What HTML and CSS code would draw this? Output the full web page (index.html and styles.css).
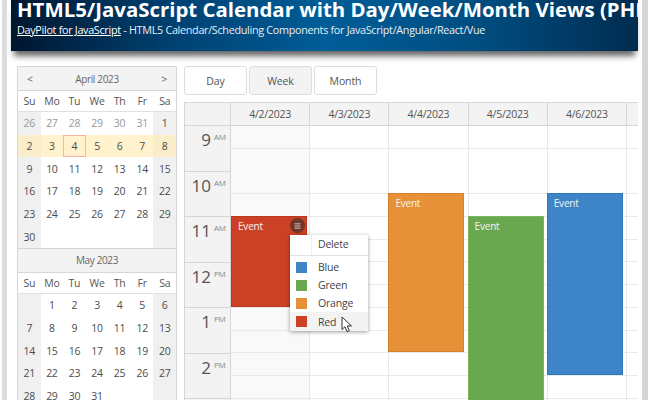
FILE: index.html
```html
<!DOCTYPE html>
<html lang="en">
<head>
<meta charset="utf-8">
<title>Calendar</title>
<link rel="stylesheet" href="styles.css">
</head>
<body>
<div class="frame">
  <header class="banner">
    <h1 class="title">HTML5/JavaScript Calendar with Day/Week/Month Views (PHP)</h1>
    <p class="sub"><a class="link" href="#">DayPilot for JavaScript</a> - HTML5 Calendar/Scheduling Components for JavaScript/Angular/React/Vue</p>
  </header>
  <main class="main">
    <aside class="nav">
      <div class="nav-head"><span>&lt;</span><span class="nav-month">April 2023</span><span>&gt;</span></div>
      <div class="dow"><span>Su</span><span>Mo</span><span>Tu</span><span>We</span><span>Th</span><span>Fr</span><span>Sa</span></div>
      <div class="days">
        <span class="we off">26</span><span class="off">27</span><span class="off">28</span><span class="off">29</span><span class="off">30</span><span class="off">31</span><span class="we">1</span>
        <span class="we hlw">2</span><span class="hl">3</span><span class="hl today">4</span><span class="hl">5</span><span class="hl">6</span><span class="hl">7</span><span class="we hlw">8</span>
        <span class="we">9</span><span>10</span><span>11</span><span>12</span><span>13</span><span>14</span><span class="we">15</span>
        <span class="we">16</span><span>17</span><span>18</span><span>19</span><span>20</span><span>21</span><span class="we">22</span>
        <span class="we">23</span><span>24</span><span>25</span><span>26</span><span>27</span><span>28</span><span class="we">29</span>
        <span class="we">30</span><span></span><span></span><span></span><span></span><span></span><span class="we"></span>
      </div>
      <div class="nav-head second"><span></span><span class="nav-month">May 2023</span><span></span></div>
      <div class="dow"><span>Su</span><span>Mo</span><span>Tu</span><span>We</span><span>Th</span><span>Fr</span><span>Sa</span></div>
      <div class="days">
        <span class="we"></span><span>1</span><span>2</span><span>3</span><span>4</span><span>5</span><span class="we">6</span>
        <span class="we">7</span><span>8</span><span>9</span><span>10</span><span>11</span><span>12</span><span class="we">13</span>
        <span class="we">14</span><span>15</span><span>16</span><span>17</span><span>18</span><span>19</span><span class="we">20</span>
        <span class="we">21</span><span>22</span><span>23</span><span>24</span><span>25</span><span>26</span><span class="we">27</span>
        <span class="we">28</span><span>29</span><span>30</span><span>31</span><span></span><span></span><span class="we"></span>
      </div>
    </aside>
    <section class="content">
      <div class="buttons">
        <button class="btn">Day</button>
        <button class="btn active">Week</button>
        <button class="btn">Month</button>
      </div>
      <div class="cal">
        <div class="cal-head">
          <div class="corner"></div>
          <div class="hcell">4/2/2023</div>
          <div class="hcell">4/3/2023</div>
          <div class="hcell">4/4/2023</div>
          <div class="hcell">4/5/2023</div>
          <div class="hcell">4/6/2023</div>
          <div class="hcell last"></div>
        </div>
        <div class="cal-body">
          <div class="times">
            <div class="hour"><span class="h">9</span><span class="ap">AM</span></div>
            <div class="hour"><span class="h">10</span><span class="ap">AM</span></div>
            <div class="hour"><span class="h">11</span><span class="ap">AM</span></div>
            <div class="hour"><span class="h">12</span><span class="ap">PM</span></div>
            <div class="hour"><span class="h">1</span><span class="ap">PM</span></div>
            <div class="hour"><span class="h">2</span><span class="ap">PM</span></div>
          </div>
          <div class="col sunday">
            <div class="event red">Event
              <span class="evt-menu"><svg class="evt-icon" viewBox="0 0 8 7"><path d="M.5 1h7M.5 3.5h7M.5 6h7"/></svg></span>
            </div>
          </div>
          <div class="col"></div>
          <div class="col"><div class="event orange">Event</div></div>
          <div class="col"><div class="event green">Event</div></div>
          <div class="col"><div class="event blue">Event</div></div>
          <div class="col last"></div>
          <div class="menu">
            <div class="mi del">Delete</div>
            <div class="mi"><i class="sw s-blue"></i>Blue</div>
            <div class="mi"><i class="sw s-green"></i>Green</div>
            <div class="mi"><i class="sw s-orange"></i>Orange</div>
            <div class="mi hover"><i class="sw s-red"></i>Red</div>
          </div>
          <svg class="cursor" viewBox="0 0 12 17"><path d="M1 1v12.5l3-2.8 2 5 2.3-1-2-4.8h4.2z"/></svg>
        </div>
      </div>
    </section>
  </main>
</div>
</body>
</html>
```
FILE: styles.css
```css
* { box-sizing: border-box; }
html, body { margin: 0; height: 100%; background: #fff; overflow: hidden; }
body {
  font-family: "Open Sans", "Liberation Sans", sans-serif;
  color: #444;
  padding: 0 2px 0 2px;
}
.frame {
  height: 400px;
  width: 646px;
  border-left: 5px solid #dcdcdc;
  border-right: 6px solid #d6d6d6;
  padding: 0 4px 0 4px;
  overflow: hidden;
  background: #fff;
}
.banner {
  height: 51px;
  padding: 0 0 0 6px;
  margin-bottom: 15px;
  background: linear-gradient(90deg, #00162f 0%, #004070 25%, #005d98 50%, #004d80 75%, #002c50 100%);
  box-shadow: 0 8px 6px -3px rgba(0, 0, 0, .6);
  color: #fff;
  overflow: hidden;
}
.title {
  margin: -6px 0 0;
  font-size: 20.4px;
  line-height: 30px;
  font-weight: 700;
  white-space: nowrap;
}
.sub {
  margin: -2px 0 0;
  font-size: 10.8px;
  letter-spacing: -.3px;
  line-height: 15px;
  white-space: nowrap;
  color: #e8eef4;
}
.link { color: #fff; }
.main { display: flex; gap: 7px; padding-left: 6px; overflow: hidden; height: 334px; }
.nav {
  flex: 0 0 160px;
  border: 1px solid #d6d6d6;
  border-bottom: 0;
  font-size: 10.5px;
  letter-spacing: -.3px;
  align-self: flex-start;
}
.nav-head {
  height: 24px;
  display: flex;
  justify-content: space-between;
  align-items: center;
  padding: 0 9px;
  background: #f3f3f3;
  border-bottom: 1px solid #d6d6d6;
  color: #666;
}
.nav-head.second { border-top: 1px solid #d6d6d6; height: 25px; }
.nav-month { font-size: 10px; letter-spacing: -.35px; }
.dow {
  display: grid;
  grid-template-columns: repeat(7, 1fr);
  height: 21px;
  align-items: center;
  text-align: center;
  border-bottom: 1px solid #e0e0e0;
  color: #555;
}
.days { display: grid; grid-template-columns: repeat(7, 1fr); grid-auto-rows: 22.67px; }
.days span {
  display: flex;
  align-items: center;
  justify-content: center;
  color: #4c4c4c;
}
.days .we { background: #f0f0f0; }
.days .off { color: #999; }
.days .hl { background: #fff2cc; }
.days .hlw { background: #f9edca; }
.days .today { border: 1px solid #f7b3a3; }
.content { flex: 1 1 0; min-width: 0; }
.buttons { display: flex; gap: 2px; height: 36px; }
.btn {
  width: 63px;
  height: 29px;
  border: 1px solid #ddd;
  border-radius: 3px;
  background: #fff;
  color: #555;
  font: 10.5px "Open Sans", "Liberation Sans", sans-serif;
  letter-spacing: -.1px;
  padding: 0;
}
.btn.active { background: #f3f3f3; }
.cal { border-top: 1px solid #d6d6d6; border-left: 1px solid #d6d6d6; position: relative; }
.cal-head { display: flex; height: 23px; border-bottom: 1px solid #d6d6d6; background: #f3f3f3; }
.corner { flex: 0 0 46px; border-right: 1px solid #d6d6d6; }
.hcell {
  flex: 0 0 79.2px;
  border-right: 1px solid #d6d6d6;
  font-size: 10.5px;
  letter-spacing: -.25px;
  line-height: 22px;
  text-align: center;
  color: #555;
}
.hcell.last { flex: 1 1 0; border-right: 0; }
.cal-body { display: flex; position: relative; height: 290px; overflow: hidden; }
.times { flex: 0 0 46px; background: #f3f3f3; border-right: 1px solid #d6d6d6; }
.hour {
  height: 45.5px;
  border-bottom: 1px solid #d6d6d6;
  display: flex;
  justify-content: flex-end;
  align-items: flex-start;
  padding: 3px 3px 0 0;
  color: #555;
}
.h { font-size: 17px; line-height: 22px; }
.ap { font-size: 8px; letter-spacing: -.2px; line-height: 10px; margin: 3px 0 0 3px; color: #888; width: 13px; }
.col {
  flex: 0 0 79.2px;
  position: relative;
  border-right: 1px solid #e8e8e8;
  background: repeating-linear-gradient(180deg, transparent 0, transparent 21.75px, #e9e9e9 21.75px, #e9e9e9 22.75px);
}
.col.sunday { background-color: #f9f9f9; }
.col.last { flex: 1 1 0; border-right: 0; }
.event {
  position: absolute;
  left: -1px;
  width: 76px;
  padding: 2px 0 0 6px;
  font-size: 10px;
  letter-spacing: -.2px;
  line-height: 14px;
  color: #f4f4f4;
  border: 1px solid;
}
.red { top: 90px; height: 91px; left: 0; background: #cc4125; border-color: #b9391f; }
.orange { top: 67px; height: 159px; background: #e69138; border-color: #d3832e; }
.green { top: 90px; height: 190px; background: #6aa84f; border-color: #7bb562; }
.blue { top: 67px; height: 182px; background: #3d85c6; border-color: #2f78ba; }
.evt-menu {
  position: absolute;
  right: 1px;
  top: 1px;
  width: 15px;
  height: 15px;
  border-radius: 50%;
  background: #6f3529;
  display: flex;
  align-items: center;
  justify-content: center;
}
.evt-icon { width: 7px; height: 6px; fill: none; stroke: #e8d8d4; stroke-width: 1; }
.menu {
  position: absolute;
  left: 105px;
  top: 109px;
  width: 78px;
  background: #fff;
  box-shadow: 0 1px 4px rgba(0, 0, 0, .4);
  font-size: 10.5px;
  letter-spacing: -.2px;
  color: #444;
}
.mi {
  height: 18px;
  display: flex;
  align-items: center;
  padding-left: 6px;
}
.mi.del {
  height: 21px;
  padding: 0 0 2px 28px;
  border-bottom: 1px solid #e3e3e3;
  margin-bottom: 2px;
  background: linear-gradient(#eeeeee, #eeeeee) no-repeat 21px 0 / 1px 100%;
}
.mi.hover { background: #f3f3f3; height: 19px; }
.sw { width: 11px; height: 11px; margin-right: 11px; flex: none; }
.s-blue { background: #3d85c6; }
.s-green { background: #6aa84f; }
.s-orange { background: #e69138; }
.s-red { background: #cc4125; }
.cursor {
  position: absolute;
  left: 156px;
  top: 190px;
  width: 12px;
  height: 17px;
  fill: #fff;
  stroke: #333;
  stroke-width: 1;
}
```
